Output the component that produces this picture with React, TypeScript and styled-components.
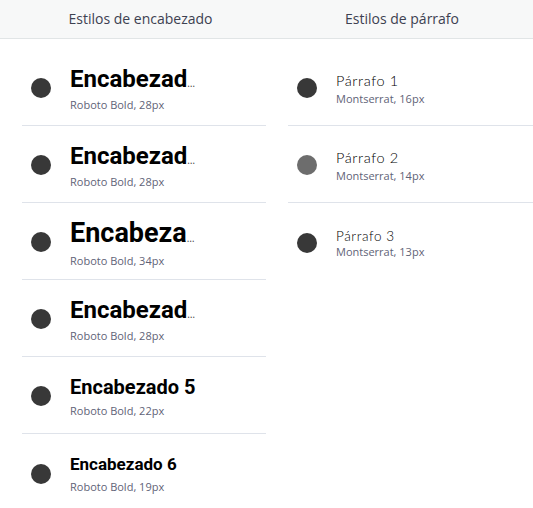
import React from "react";
import styled, { createGlobalStyle } from "styled-components";

const Global = createGlobalStyle`
  html, body { margin: 0; padding: 0; background: #ffffff; }
  body { font-family: "Open Sans", "Noto Sans", sans-serif; }
  * { box-sizing: border-box; }
`;

const Page = styled.div`
  width: 533px;
  height: 508px;
  overflow: hidden;
  background: #ffffff;
`;

const Header = styled.div`
  display: grid;
  grid-template-columns: 281px 242px;
  height: 39px;
  background: #f7f8f8;
  border-bottom: 1px solid #e1e5e6;
`;

const HeaderCell = styled.div`
  display: flex;
  align-items: center;
  justify-content: center;
  font-family: "Open Sans", "Noto Sans", sans-serif;
  font-size: 14px;
  color: #3d4151;
  padding-bottom: 1px;
`;

const Columns = styled.div`
  display: grid;
  grid-template-columns: 244px 1fr;
  column-gap: 22px;
  padding: 10px 0 0 22px;
`;

const List = styled.div`
  display: flex;
  flex-direction: column;
`;

const Row = styled.div`
  display: flex;
  align-items: center;
  height: 77px;
  border-bottom: 1px solid #dfe3ea;
  padding-left: 9px;
  &:last-child { border-bottom: none; }
`;

const Dot = styled.span<{ $muted?: boolean }>`
  flex: 0 0 auto;
  width: 20px;
  height: 20px;
  border-radius: 50%;
  background: ${(p) => (p.$muted ? "#6d6d6d" : "#383838")};
  margin-right: 19px;
  margin-top: 2px;
`;

const TextBlock = styled.div`
  display: flex;
  flex-direction: column;
  min-width: 0;
  padding-top: 4px;
`;

const HeadingClip = styled.div`
  width: 134px;
  white-space: nowrap;
  overflow: hidden;
  text-overflow: ellipsis;
  font-family: "Open Sans", sans-serif;
  font-size: 10px;
  color: #444;
`;

const HeadingText = styled.span<{ $size: number }>`
  font-family: Roboto, "Liberation Sans", sans-serif;
  font-weight: 700;
  font-size: ${(p) => p.$size}px;
  line-height: 1.15;
  color: #000000;
`;

const ParaText = styled.div<{ $size: number }>`
  font-family: "Lato", "Open Sans", sans-serif;
  font-weight: 300;
  font-size: ${(p) => p.$size}px;
  line-height: 1.25;
  letter-spacing: 0.6px;
  color: #000000;
`;

const Caption = styled.div<{ $gap: number }>`
  font-family: "Open Sans", "Noto Sans", sans-serif;
  font-size: 11px;
  line-height: 14px;
  color: #5f6377;
  margin-top: ${(p) => p.$gap}px;
`;

const headings = [
  { text: "Encabezado 1", size: 28, shown: 24 },
  { text: "Encabezado 2", size: 28, shown: 24 },
  { text: "Encabezado 3", size: 34, shown: 27 },
  { text: "Encabezado 4", size: 28, shown: 24 },
  { text: "Encabezado 5", size: 22, shown: 20 },
  { text: "Encabezado 6", size: 19, shown: 17 },
];

const paragraphs = [
  { text: "Párrafo 1", size: 16, shown: 14.5, muted: false },
  { text: "Párrafo 2", size: 14, shown: 14.5, muted: true },
  { text: "Párrafo 3", size: 13, shown: 13.5, muted: false },
];

export default function App() {
  return (
    <Page>
      <Global />
      <Header>
        <HeaderCell>Estilos de encabezado</HeaderCell>
        <HeaderCell>Estilos de párrafo</HeaderCell>
      </Header>
      <Columns>
        <List>
          {headings.map((h) => (
            <Row key={h.text}>
              <Dot />
              <TextBlock>
                <HeadingClip>
                  <HeadingText $size={h.shown}>{h.text}</HeadingText>
                </HeadingClip>
                <Caption $gap={5}>
                  Roboto Bold, {h.size}px
                </Caption>
              </TextBlock>
            </Row>
          ))}
        </List>
        <List>
          {paragraphs.map((p) => (
            <Row key={p.text}>
              <Dot $muted={p.muted} />
              <TextBlock>
                <ParaText $size={p.shown}>{p.text}</ParaText>
                <Caption $gap={1}>
                  Montserrat, {p.size}px
                </Caption>
              </TextBlock>
            </Row>
          ))}
        </List>
      </Columns>
    </Page>
  );
}
